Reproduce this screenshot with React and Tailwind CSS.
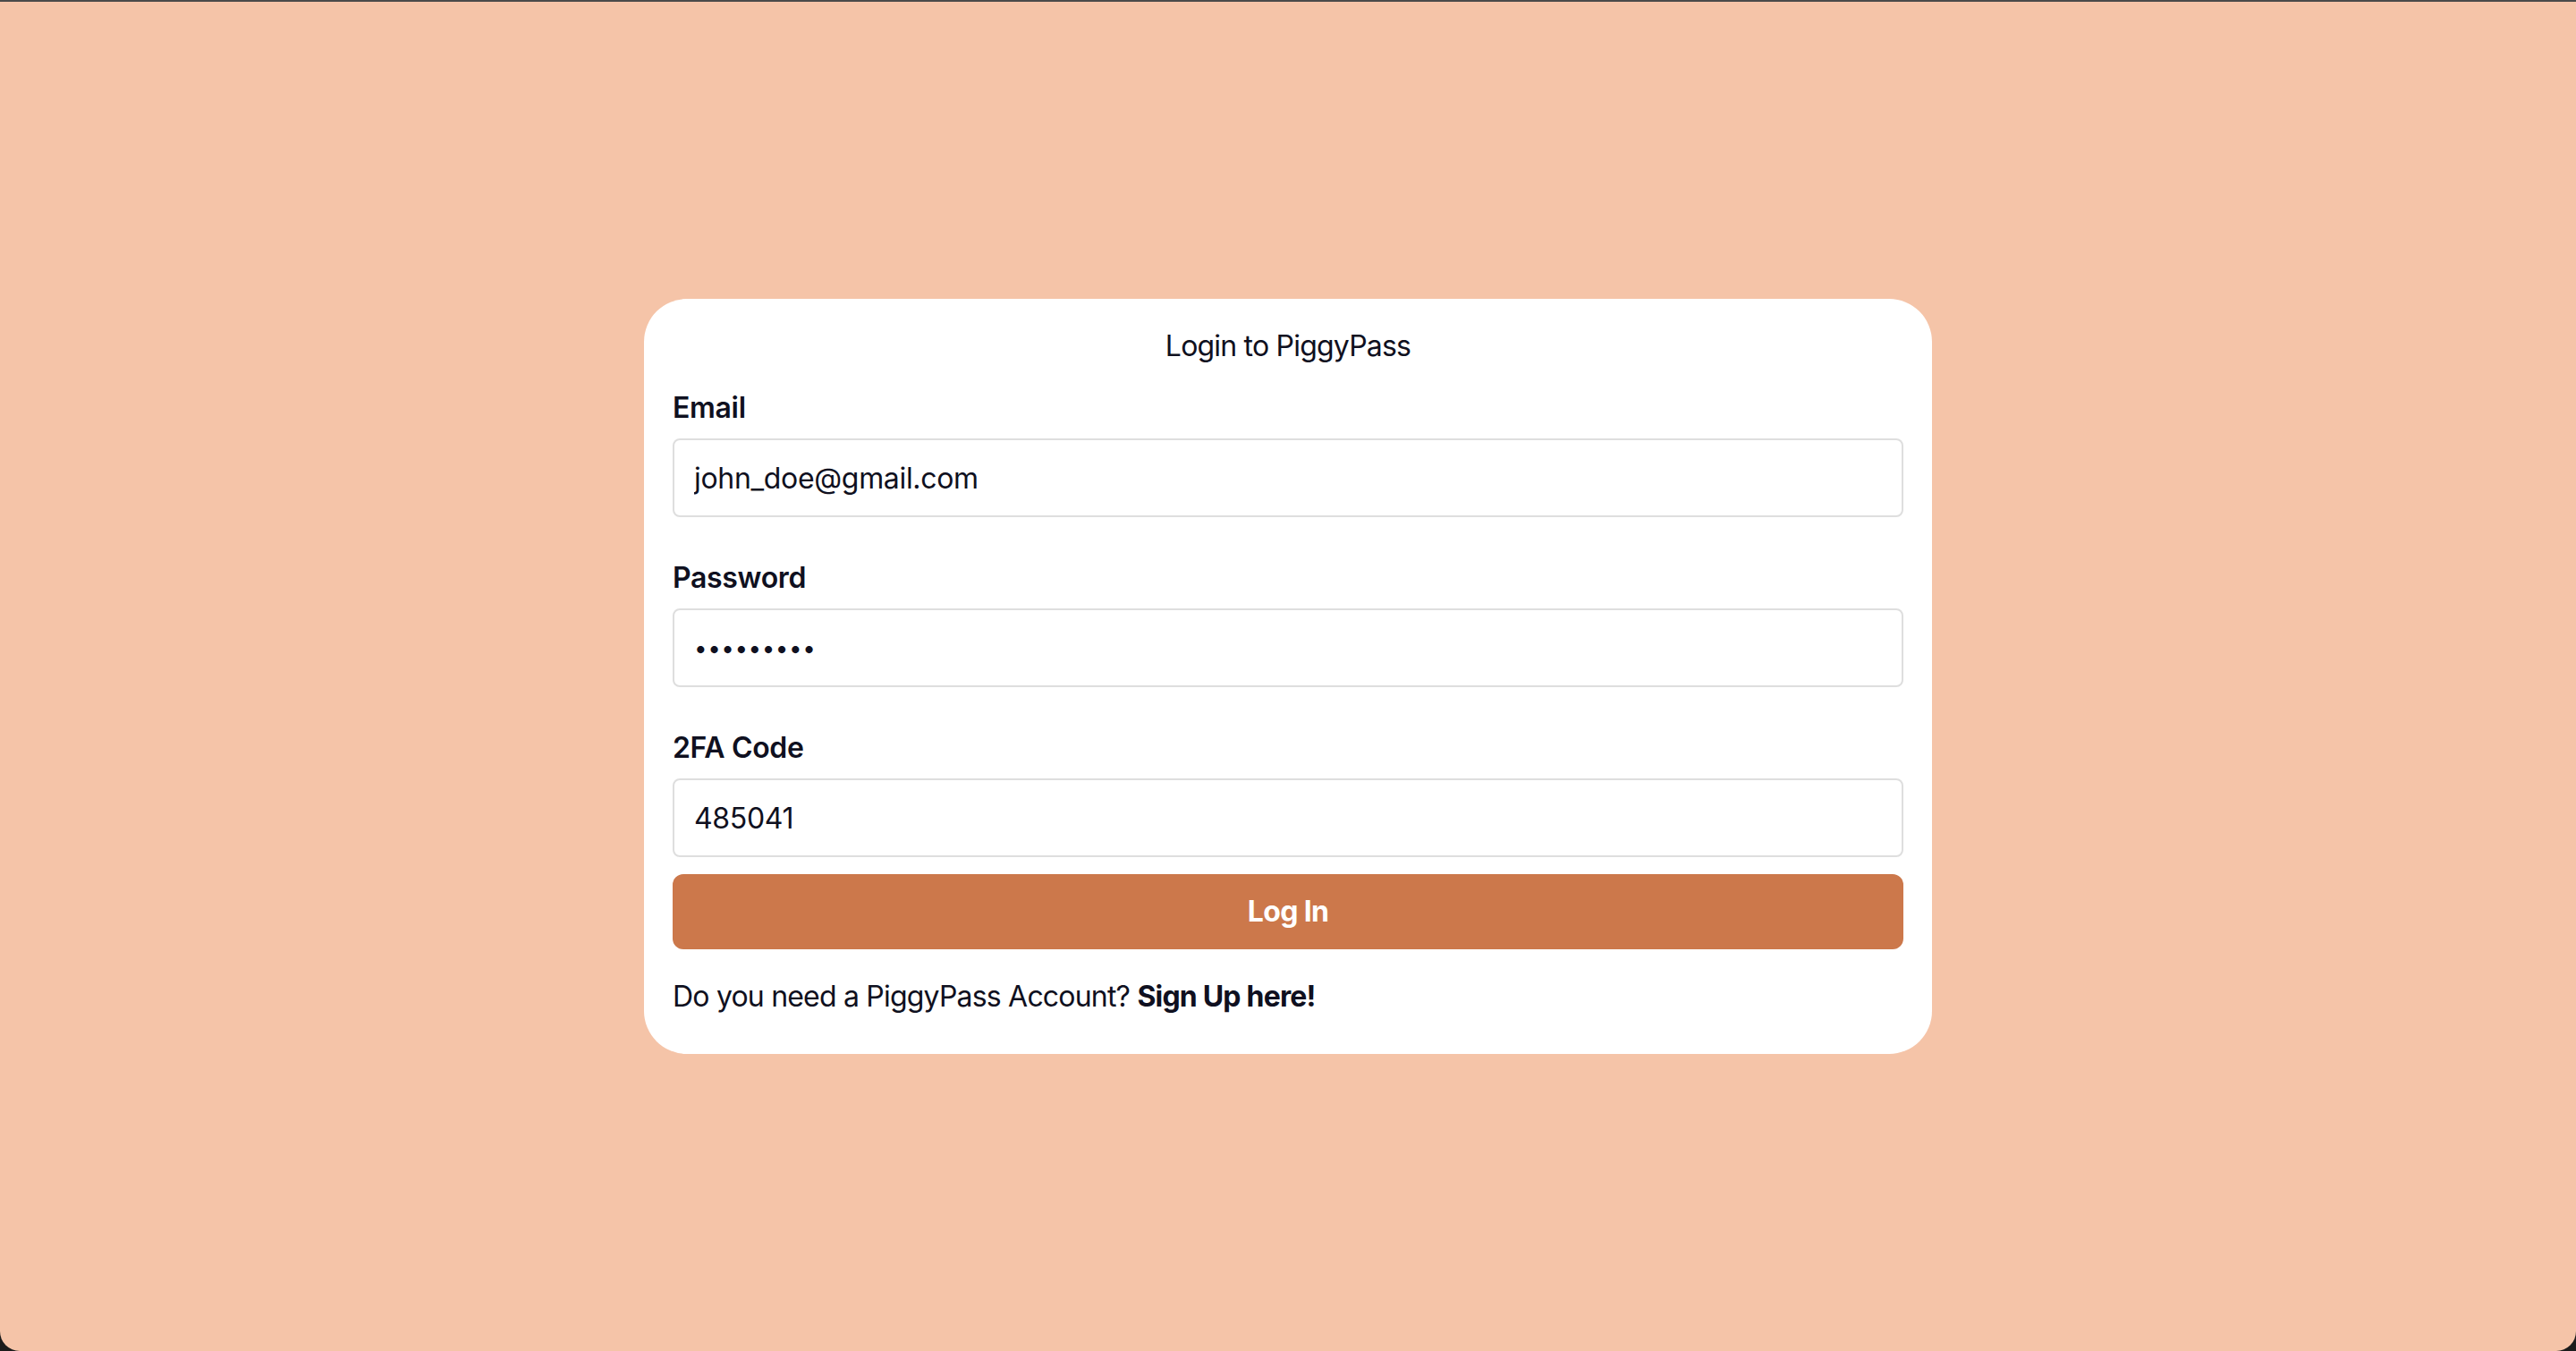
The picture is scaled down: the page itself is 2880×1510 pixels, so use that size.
import { useState } from "react";

function Field({ label, type = "text", value, onChange, className = "" }) {
  return (
    <div className={className}>
      <label className="block text-[32px] leading-[48px] font-semibold text-[#0f1020]">{label}</label>
      <input
        type={type}
        value={value}
        onChange={(e) => onChange(e.target.value)}
        className={
          type === "password"
            ? "mt-[10px] block w-full h-[88px] px-[22px] rounded-[8px] border-2 border-[#dedede] bg-white text-[26px] tracking-[0.02em] text-[#0f1020] outline-none"
            : "mt-[10px] block w-full h-[88px] px-[22px] rounded-[8px] border-2 border-[#dedede] bg-white text-[32px] text-[#0f1020] outline-none"
        }
      />
    </div>
  );
}

export default function App() {
  const [email, setEmail] = useState("john_doe@gmail.com");
  const [password, setPassword] = useState("piggypass");
  const [code, setCode] = useState("485041");

  return (
    <div className="bg-[#1b1b1b] min-h-screen" style={{ fontFamily: 'Inter, "Noto Sans", sans-serif' }}>
      <div className="min-h-screen flex items-center justify-center bg-[#f5c4a8] border-t-2 border-[#4a4a4a] rounded-b-[22px]">
        <form
          onSubmit={(e) => e.preventDefault()}
          className="w-[1440px] bg-white rounded-[48px] px-8 pt-[29px] pb-[40px] tracking-[-0.02em]"
        >
          <h1 className="text-center text-[32px] leading-[48px] text-[#0f1020] tracking-[-0.025em]">Login to PiggyPass</h1>

          <Field className="mt-[21px]" label="Email" value={email} onChange={setEmail} />
          <Field className="mt-[44px]" label="Password" type="password" value={password} onChange={setPassword} />
          <Field className="mt-[44px]" label="2FA Code" value={code} onChange={setCode} />

          <button
            type="submit"
            className="mt-[19px] w-full h-[84px] rounded-[12px] bg-[#cc784b] text-white text-[32px] font-bold tracking-[-0.02em]"
          >
            Log In
          </button>

          <p className="mt-[29px] text-[32px] leading-[48px] text-[#0f1020] tracking-[-0.025em]">
            Do you need a PiggyPass Account? <a href="#" className="font-bold">Sign Up here!</a>
          </p>
        </form>
      </div>
    </div>
  );
}
